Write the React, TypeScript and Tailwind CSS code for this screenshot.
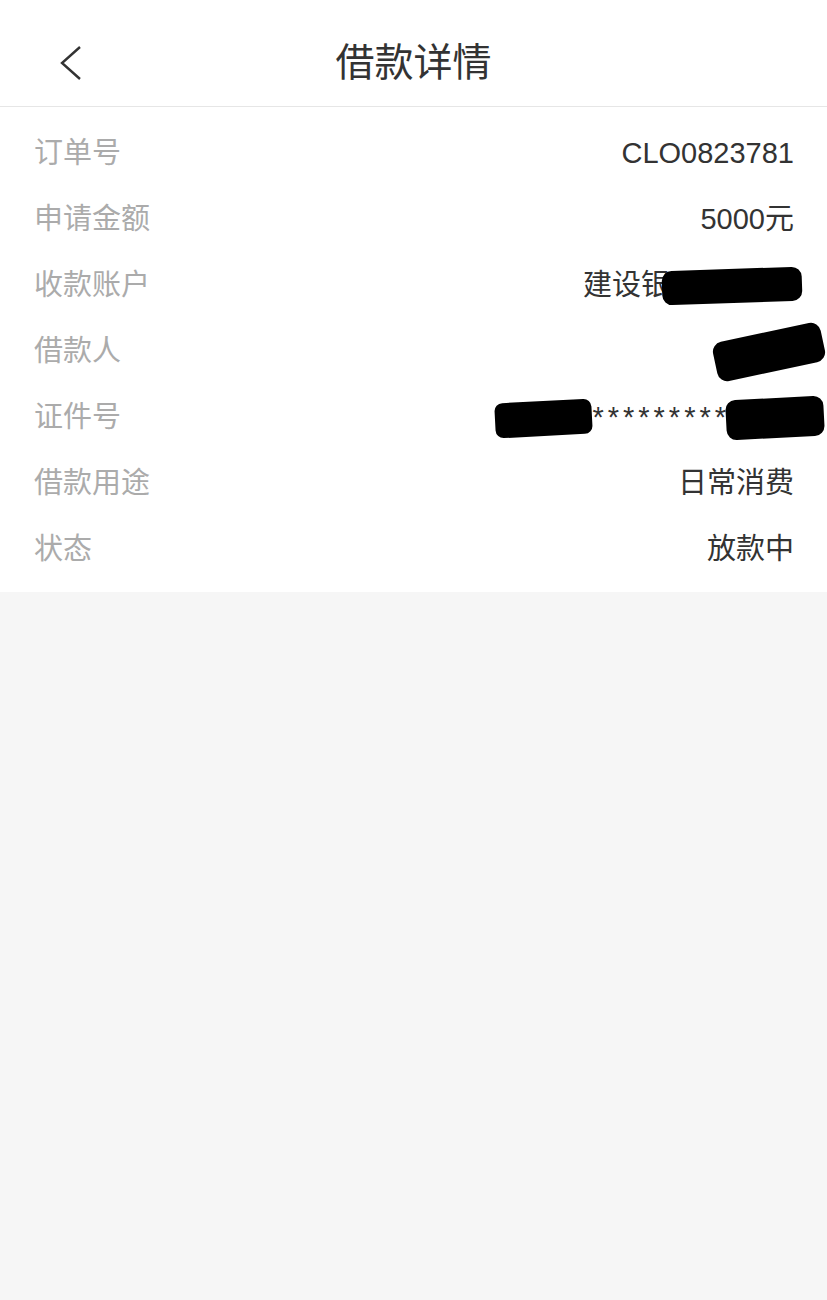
import React from "react";

const font = {
  fontFamily: '"Liberation Sans", "Noto Sans CJK SC", sans-serif',
};

function Row({ label, children }: { label: string; children?: React.ReactNode }) {
  return (
    <div className="flex h-[66px] items-center justify-between">
      <span className="text-[29px] text-[#ababab]">{label}</span>
      <div className="flex items-center text-[29px] text-[#333333]">{children}</div>
    </div>
  );
}

export default function App() {
  return (
    <div className="min-h-[1300px] bg-[#f6f6f6]" style={font}>
      <div className="flex h-[107px] items-center border-b border-[#e6e6e6] bg-white pt-[20px]">
        <div className="flex w-[120px] justify-start pl-[56px]">
          <svg width="30" height="36" viewBox="0 0 30 36">
            <path d="M24 2 L6 18 L24 34" fill="none" stroke="#333" strokeWidth="2.4" />
          </svg>
        </div>
        <div className="flex flex-1 justify-center">
          <span className="text-[39px] text-[#333333]">借款详情</span>
        </div>
        <div className="w-[120px]" />
      </div>
      <div className="bg-white pl-[34px] pr-[33px] pt-[14px] pb-[9px]">
        <Row label="订单号">CLO0823781</Row>
        <Row label="申请金额">5000元</Row>
        <Row label="收款账户">
          <span>建设银</span>
          <span className="-ml-[8px] -mr-[8px] h-[34px] w-[140px] -rotate-2 rounded-[10px] bg-black" />
        </Row>
        <Row label="借款人">
          <span className="-mr-[30px] h-[40px] w-[110px] -rotate-12 rounded-[10px] bg-black" />
        </Row>
        <Row label="证件号">
          <span className="h-[35px] w-[97px] -rotate-3 rounded-[8px] bg-black" />
          <span className="tracking-[4px]">*********</span>
          <span className="-ml-[4px] -mr-[30px] h-[40px] w-[98px] -rotate-3 rounded-[10px] bg-black" />
        </Row>
        <Row label="借款用途">日常消费</Row>
        <Row label="状态">放款中</Row>
      </div>
    </div>
  );
}
